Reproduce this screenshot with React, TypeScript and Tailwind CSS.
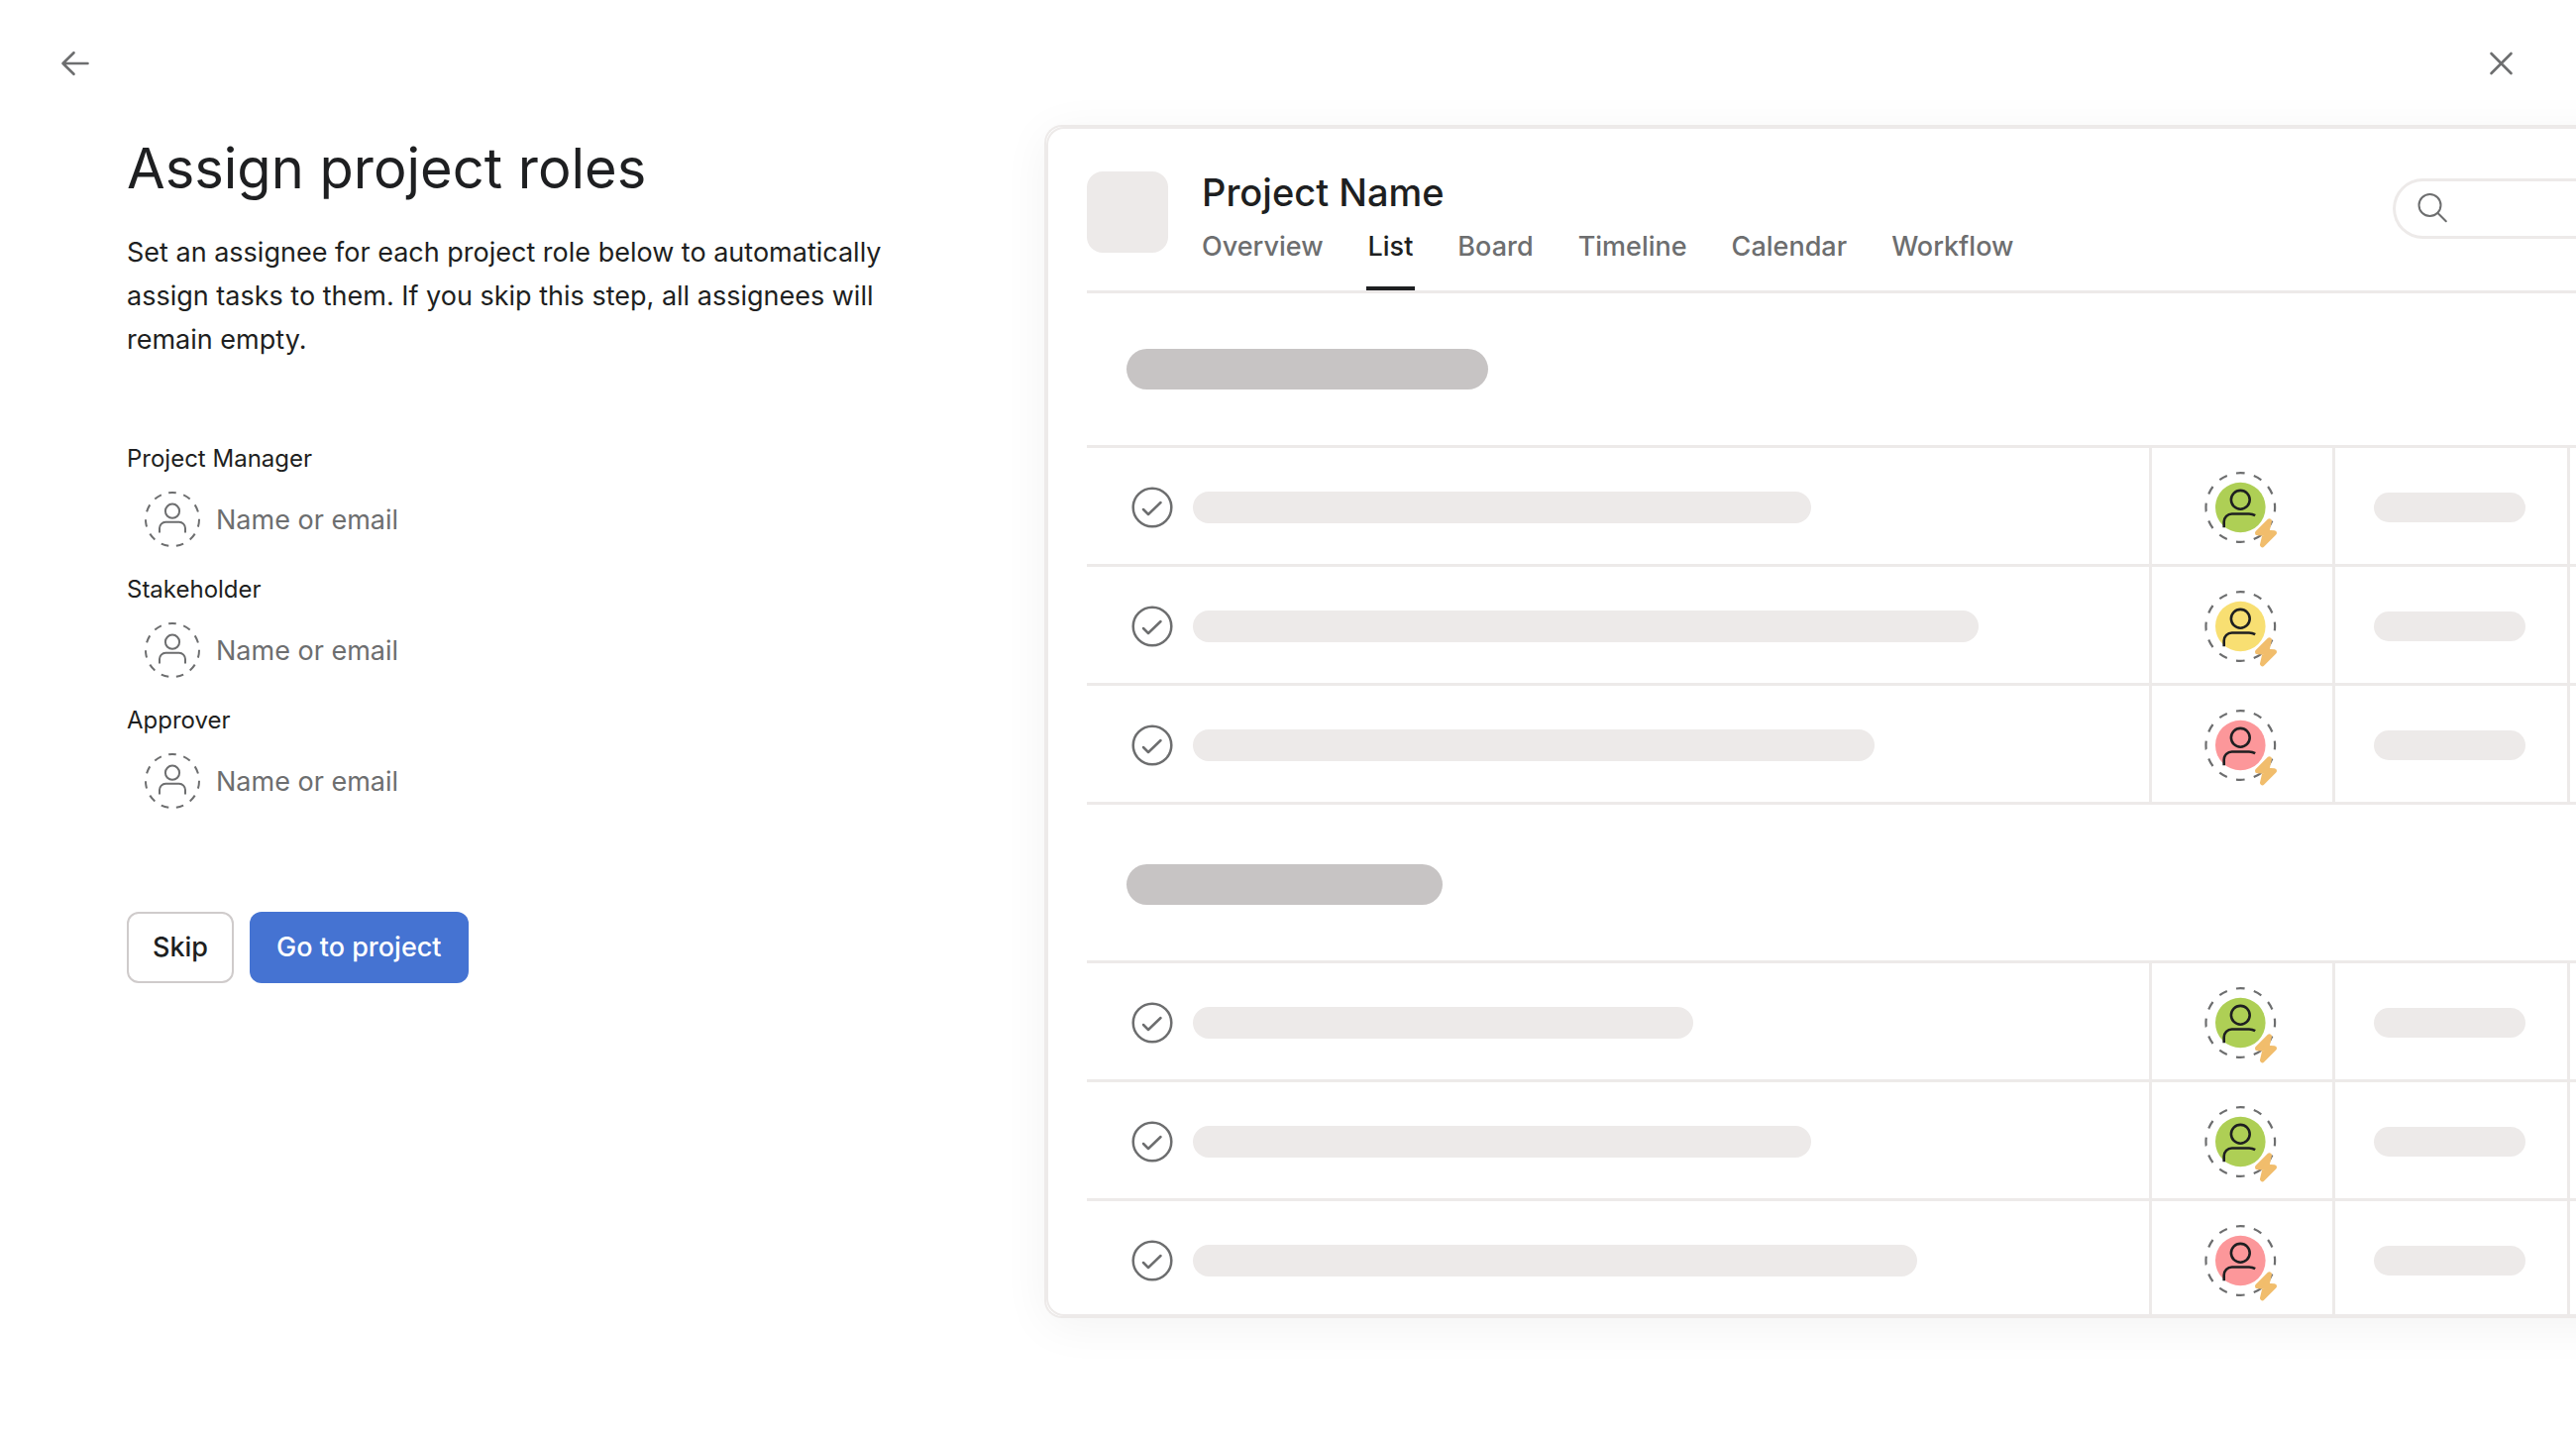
import React from "react";

type Tone = "green" | "yellow" | "red";

const ROLES = [
  { id: "project-manager", label: "Project Manager" },
  { id: "stakeholder", label: "Stakeholder" },
  { id: "approver", label: "Approver" },
];

const TABS = ["Overview", "List", "Board", "Timeline", "Calendar", "Workflow"];

const TONES: Record<Tone, string> = {
  green: "#aecf55",
  yellow: "#f8df72",
  red: "#fc979a",
};

const SECTIONS: { heading: string; rows: { bar: string; tone: Tone }[] }[] = [
  {
    heading: "w-[365px]",
    rows: [
      { bar: "w-[624px]", tone: "green" },
      { bar: "w-[793px]", tone: "yellow" },
      { bar: "w-[688px]", tone: "red" },
    ],
  },
  {
    heading: "w-[319px]",
    rows: [
      { bar: "w-[505px]", tone: "green" },
      { bar: "w-[624px]", tone: "green" },
      { bar: "w-[731px]", tone: "red" },
    ],
  },
];

function BackIcon() {
  return (
    <svg width="32" height="32" viewBox="0 0 32 32" fill="none" stroke="#6d6e6f" strokeWidth="2.6" strokeLinecap="round" strokeLinejoin="round" aria-hidden="true">
      <path d="M28.500 16H3.500M14.500 5.200 3.500 16l11 10.800" />
    </svg>
  );
}

function CloseIcon() {
  return (
    <svg width="32" height="32" viewBox="0 0 32 32" fill="none" stroke="#6d6e6f" strokeWidth="2.6" strokeLinecap="round" aria-hidden="true">
      <path d="M6.500 6l20 20M26.500 6l-20 20" />
    </svg>
  );
}

function EmptyPersonIcon() {
  return (
    <svg width="56" height="56" viewBox="0 0 56 56" fill="none" stroke="#6d6e6f" strokeWidth="2" className="shrink-0" aria-hidden="true">
      <circle cx="28" cy="28" r="27" pathLength="110" strokeDasharray="5 5" transform="rotate(-98.200 28 28)" />
      <circle cx="28" cy="19.700" r="7.100" />
      <path d="M15 41.500v-4.500a6.200 6.200 0 0 1 6.200-6.200h13.600a6.200 6.200 0 0 1 6.200 6.200v4.500" />
    </svg>
  );
}

function CheckIcon() {
  return (
    <svg width="42" height="42" viewBox="0 0 42 42" fill="none" stroke="#6d6e6f" strokeWidth="2.500" strokeLinecap="round" strokeLinejoin="round" className="shrink-0" aria-hidden="true">
      <circle cx="21" cy="21" r="19.300" />
      <path d="M12 23l5 5 12.500-12" />
    </svg>
  );
}

function AssigneeIcon({ tone }: { tone: Tone }) {
  return (
    <svg width="84" height="84" viewBox="0 0 84 84" fill="none" aria-hidden="true">
      <circle cx="40.300" cy="42" r="34.800" stroke="#6d6e6f" strokeWidth="2.200" pathLength="240" strokeDasharray="9.500 10.500" transform="rotate(-97.100 40.300 42)" />
      <circle cx="40.300" cy="42" r="25.300" fill={TONES[tone]} />
      <circle cx="40.300" cy="34.300" r="9.400" stroke="#1e1f21" strokeWidth="2.600" />
      <path d="M23.700 62.200v-5.700a8 8 0 0 1 8-8h17.300q3.500 0 6.200 1.700" stroke="#1e1f21" strokeWidth="2.600" />
      <path
        d="M69.500 55.800 66.800 67.300 74.500 67.800 62.500 79.800 65.200 68.300 57.500 67.800Z"
        fill="#f1bd6c"
        stroke="#f1bd6c"
        strokeWidth="5"
        strokeLinejoin="round"
      />
    </svg>
  );
}

function SearchIcon() {
  return (
    <svg width="32" height="32" viewBox="0 0 32 32" fill="none" stroke="#6d6e6f" strokeWidth="2" strokeLinecap="round" className="shrink-0" aria-hidden="true">
      <circle cx="12.500" cy="13" r="11" />
      <path d="M20.500 21l8.300 8.300" />
    </svg>
  );
}

function TaskRow({ bar, tone }: { bar: string; tone: Tone }) {
  return (
    <div className="flex h-[120px] border-t-[3px] border-[#edeae9]">
      <div className="flex min-w-0 flex-1 items-center gap-5 overflow-hidden pt-[3px] pl-[45px]">
        <CheckIcon />
        <span className={`${bar} h-8 rounded-full bg-[#edeae9]`} />
      </div>
      <div className="flex w-[185px] items-center justify-center border-l-[3px] border-[#edeae9] pt-[3px]">
        <AssigneeIcon tone={tone} />
      </div>
      <div className="flex w-[237px] items-center border-l-[3px] border-[#edeae9] pt-[3px] pl-[39px]">
        <span className="h-[30px] w-[153px] rounded-full bg-[#edeae9]" />
      </div>
      <div className="w-[89px] border-l-[3px] border-[#edeae9]" />
    </div>
  );
}

function ProjectPreview() {
  return (
    <section aria-label="Project preview" className="-mr-20 self-start rounded-l-[18px] border-2 border-r-0 border-[#edeae9] bg-white shadow-[0_8px_48px_rgba(0,0,0,0.05)]">
      <div className="overflow-hidden rounded-l-[18px] border-2 border-r-0 border-[#edeae9] pl-[39px]">
        <header className="flex border-b-[3px] border-[#edeae9]">
          <div className="mt-[43px] size-[82px] shrink-0 rounded-2xl bg-[#edeae9]" />
          <div className="ml-8 mt-10 flex-1">
            <h2 className="pl-[2px] text-[38px] leading-[48px] font-medium text-[#1e1f21]">Project Name</h2>
            <nav aria-label="Project views" className="mt-[13px] flex gap-[41px]">
              {TABS.map((tab) => (
                <button
                  key={tab}
                  type="button"
                  className={
                    tab === "List"
                      ? "border-b-4 border-[#1e1f21] px-[2px] pb-[22px] text-[27px] leading-9 font-medium text-[#1e1f21]"
                      : "border-b-4 border-transparent px-[2px] pb-[22px] text-[27px] leading-9 font-medium text-[#6d6e6f]"
                  }
                >
                  {tab}
                </button>
              ))}
            </nav>
          </div>
          <label className="mt-[50px] flex h-[61px] w-[265px] rounded-l-full border-[3px] border-r-0 border-[#edeae9] pt-[11px] pl-[22px]">
            <SearchIcon />
            <input type="search" aria-label="Search" className="h-8 w-full min-w-0 pl-3 text-[27px] outline-none" />
          </label>
        </header>
        <div className="-mb-[3px]">
          {SECTIONS.map((section, index) => (
            <div key={section.heading}>
              <div className={index === 0 ? "flex h-[153px] items-center pl-10" : "flex h-[160px] items-center border-t-[3px] border-[#edeae9] pt-1 pl-10"}>
                <span className={`${section.heading} h-[41px] rounded-full bg-[#c7c4c4]`} />
              </div>
              {section.rows.map((row, i) => (
                <TaskRow key={i} bar={row.bar} tone={row.tone} />
              ))}
            </div>
          ))}
        </div>
      </div>
    </section>
  );
}

export default function App() {
  return (
    <div className="flex min-h-screen flex-col overflow-hidden bg-white font-['Inter','Liberation_Sans',sans-serif] text-[#1e1f21]">
      <div className="flex h-[126px] items-start justify-between px-[60px] pt-12">
        <button type="button" aria-label="Back">
          <BackIcon />
        </button>
        <button type="button" aria-label="Close">
          <CloseIcon />
        </button>
      </div>
      <main className="grid grid-cols-[527fr_773fr]">
        <div className="pt-2 pr-24 pl-32">
          <h1 className="text-[56px] leading-[72px]">Assign project roles</h1>
          <p className="mt-[27px] max-w-[800px] text-[27px] leading-[44px]">
            Set an assignee for each project role below to automatically assign tasks to them. If you skip this step, all assignees will remain empty.
          </p>
          <form className="mt-[82px]">
            {ROLES.map((role) => (
              <div key={role.id} className="h-[132px]">
                <label htmlFor={role.id} className="block text-[24px] leading-8">
                  {role.label}
                </label>
                <div className="mt-[17px] flex items-center gap-4 pl-[18px]">
                  <EmptyPersonIcon />
                  <input
                    id={role.id}
                    type="text"
                    placeholder="Name or email"
                    className="h-14 w-full text-[27px] outline-none placeholder:text-[#6d6e6f]"
                  />
                </div>
              </div>
            ))}
            <div className="mt-[77px] flex gap-4">
              <button type="button" className="h-[72px] rounded-xl border-2 border-[#cfcbcb] px-6 text-[27px] font-medium">
                Skip
              </button>
              <button type="button" className="h-[72px] rounded-xl bg-[#4573d2] px-[27px] text-[27px] font-medium text-white">
                Go to project
              </button>
            </div>
          </form>
        </div>
        <ProjectPreview />
      </main>
    </div>
  );
}
